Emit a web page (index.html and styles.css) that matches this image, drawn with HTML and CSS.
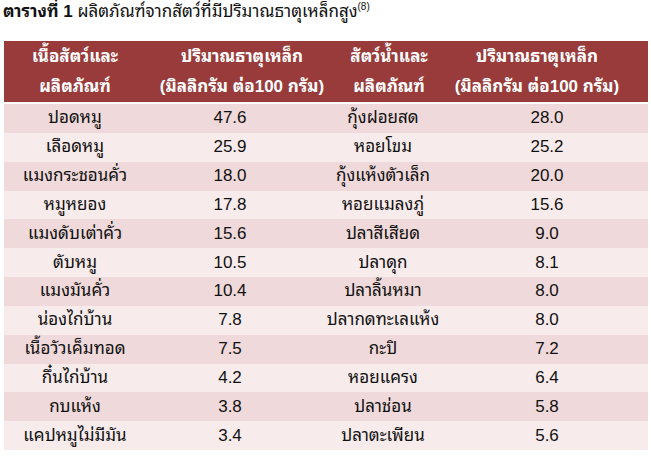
FILE: index.html
```html
<!DOCTYPE html>
<html lang="th">
<head>
<meta charset="utf-8">
<title>ตารางที่ 1</title>
<link rel="stylesheet" href="styles.css">
</head>
<body>
<div class="page">
  <p class="caption"><b>ตารางที่ 1</b> ผลิตภัณฑ์จากสัตว์ที่มีปริมาณธาตุเหล็กสูง<sup>(8)</sup></p>
  <div class="table">
    <div class="head">
      <div class="hcell">เนื้อสัตว์และ<br>ผลิตภัณฑ์</div>
      <div class="hcell">ปริมาณธาตุเหล็ก<br>(มิลลิกรัม ต่อ100 กรัม)</div>
      <div class="hcell">สัตว์น้ำและ<br>ผลิตภัณฑ์</div>
      <div class="hcell">ปริมาณธาตุเหล็ก<br>(มิลลิกรัม ต่อ100 กรัม)</div>
    </div>
    <div class="body">
      <div class="row"><span>ปอดหมู</span><span>47.6</span><span>กุ้งฝอยสด</span><span>28.0</span></div>
      <div class="row"><span>เลือดหมู</span><span>25.9</span><span>หอยโขม</span><span>25.2</span></div>
      <div class="row"><span>แมงกระชอนคั่ว</span><span>18.0</span><span>กุ้งแห้งตัวเล็ก</span><span>20.0</span></div>
      <div class="row"><span>หมูหยอง</span><span>17.8</span><span>หอยแมลงภู่</span><span>15.6</span></div>
      <div class="row"><span>แมงดับเต่าคั่ว</span><span>15.6</span><span>ปลาสีเสียด</span><span>9.0</span></div>
      <div class="row"><span>ตับหมู</span><span>10.5</span><span>ปลาดุก</span><span>8.1</span></div>
      <div class="row"><span>แมงมันคั่ว</span><span>10.4</span><span>ปลาลิ้นหมา</span><span>8.0</span></div>
      <div class="row"><span>น่องไก่บ้าน</span><span>7.8</span><span>ปลากดทะเลแห้ง</span><span>8.0</span></div>
      <div class="row"><span>เนื้อวัวเค็มทอด</span><span>7.5</span><span>กะปิ</span><span>7.2</span></div>
      <div class="row"><span>กึ๋นไก่บ้าน</span><span>4.2</span><span>หอยแครง</span><span>6.4</span></div>
      <div class="row"><span>กบแห้ง</span><span>3.8</span><span>ปลาช่อน</span><span>5.8</span></div>
      <div class="row"><span>แคปหมูไม่มีมัน</span><span>3.4</span><span>ปลาตะเพียน</span><span>5.6</span></div>
    </div>
  </div>
</div>
</body>
</html>
```

FILE: styles.css
```css
html, body {
  margin: 0;
  padding: 0;
  background: #ffffff;
}

.page {
  width: 651px;
  height: 459px;
  overflow: hidden;
  font-family: "Liberation Sans", "Noto Sans Thai Looped", "Noto Serif Thai", "Loma", "Garuda", "Noto Sans Thai", "Noto Sans", sans-serif;
  color: #111111;
}

.caption {
  margin: 0;
  padding: 1px 0 0 3px;
  font-size: 17px;
  line-height: 22px;
  height: 41px;
  box-sizing: border-box;
}

.caption b {
  font-weight: bold;
}

.caption sup {
  font-size: 10px;
  line-height: 0;
  vertical-align: 7px;
}

.table {
  margin: 0 3px 0 4px;
  display: flex;
  flex-direction: column;
  gap: 2px;
}

.head {
  background: #983b3a;
  color: #ffffff;
  display: grid;
  grid-template-columns: 142px 192px 102px 194px;
  padding: 1px 14px 0 0;
  height: 61px;
  box-sizing: border-box;
  font-weight: bold;
  font-size: 17px;
  line-height: 30px;
}

.hcell {
  text-align: center;
  white-space: nowrap;
}

.body {
  display: flex;
  flex-direction: column;
}

.row {
  display: grid;
  grid-template-columns: 142px 168px 138px 190px;
  padding-right: 6px;
  height: 28.85px;
  align-items: center;
  font-size: 17px;
  line-height: 20px;
  background: #efd9da;
}

.row:nth-child(even) {
  background: #f7ebeb;
}

.row span {
  text-align: center;
  white-space: nowrap;
}
```
